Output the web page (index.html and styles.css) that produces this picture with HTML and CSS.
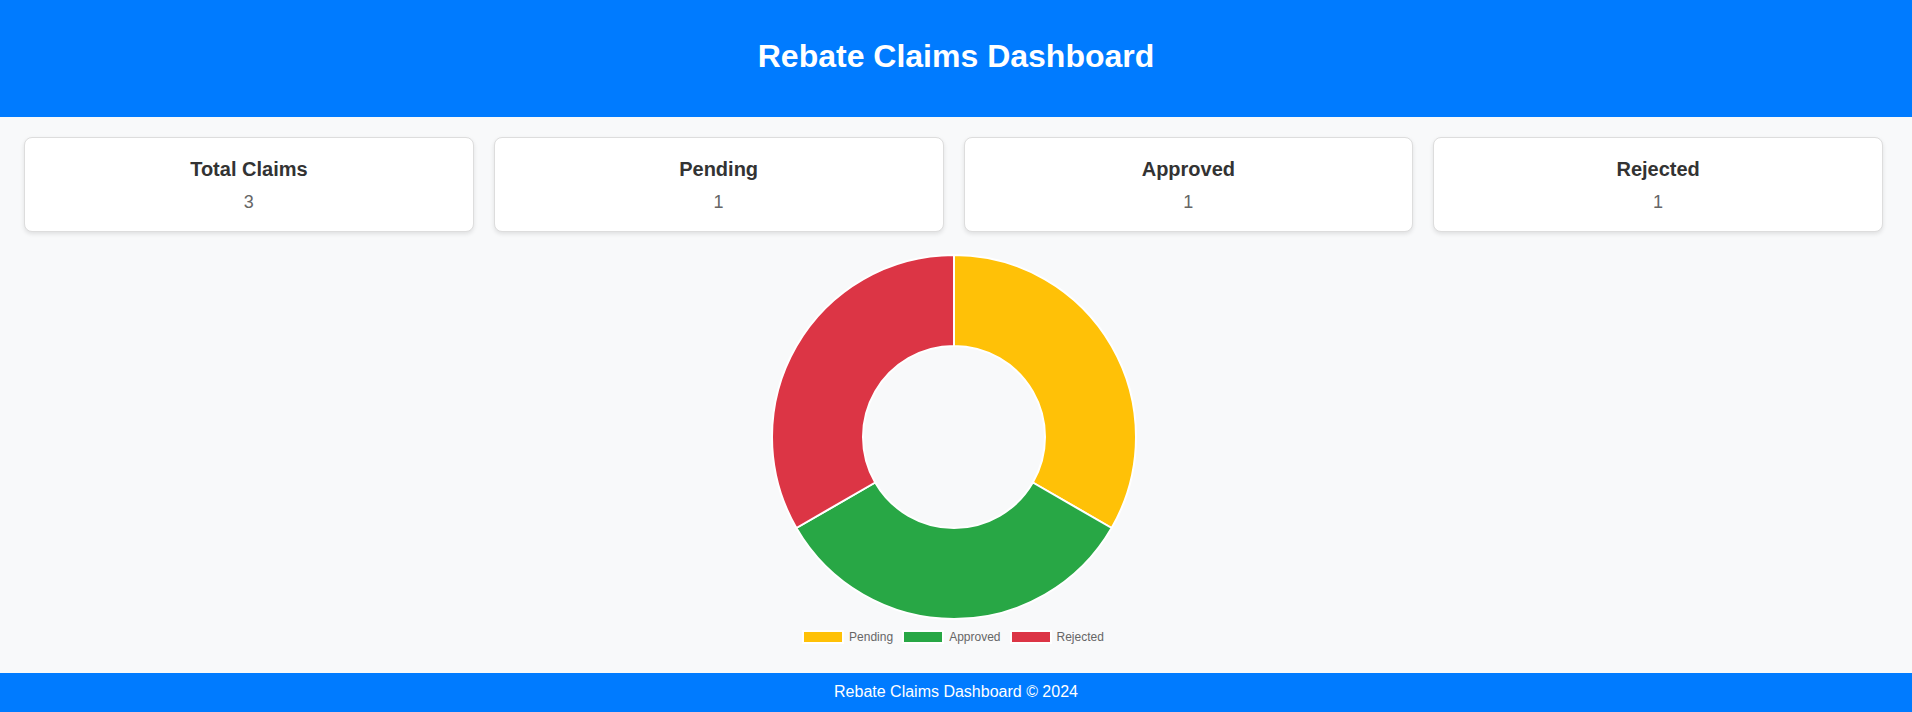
FILE: index.html
```html
<!DOCTYPE html>
<html lang="en">
<head>
<meta charset="utf-8">
<title>Rebate Claims Dashboard</title>
<link rel="stylesheet" href="styles.css">
</head>
<body>
<header class="site-header">
  <h1 class="site-title">Rebate Claims Dashboard</h1>
</header>
<main class="main">
  <section class="cards">
    <div class="card">
      <h3 class="card-title">Total Claims</h3>
      <p class="card-value">3</p>
    </div>
    <div class="card">
      <h3 class="card-title">Pending</h3>
      <p class="card-value">1</p>
    </div>
    <div class="card">
      <h3 class="card-title">Approved</h3>
      <p class="card-value">1</p>
    </div>
    <div class="card">
      <h3 class="card-title">Rejected</h3>
      <p class="card-value">1</p>
    </div>
  </section>
  <section class="chart">
    <svg class="donut" width="400" height="370" viewBox="0 0 400 370">
      <path fill="#ffc107" stroke="#ffffff" stroke-width="2" d="M200 3 A182 182 0 0 1 357.62 276 L278.81 230.5 A91 91 0 0 0 200 94 Z"/>
      <path fill="#28a745" stroke="#ffffff" stroke-width="2" d="M357.62 276 A182 182 0 0 1 42.38 276 L121.19 230.5 A91 91 0 0 0 278.81 230.5 Z"/>
      <path fill="#dc3545" stroke="#ffffff" stroke-width="2" d="M42.38 276 A182 182 0 0 1 200 3 L200 94 A91 91 0 0 0 121.19 230.5 Z"/>
    </svg>
    <div class="legend">
      <span class="legend-item"><span class="swatch swatch-pending"></span>Pending</span>
      <span class="legend-item"><span class="swatch swatch-approved"></span>Approved</span>
      <span class="legend-item"><span class="swatch swatch-rejected"></span>Rejected</span>
    </div>
  </section>
</main>
<footer class="site-footer">Rebate Claims Dashboard © 2024</footer>
</body>
</html>
```

FILE: styles.css
```css
* { box-sizing: border-box; }

body {
  margin: 0;
  background: #f8f9fa;
  font-family: "Liberation Sans", Arial, Helvetica, sans-serif;
  color: #333;
}

.site-header {
  background: #007bff;
  color: #fff;
  padding: 38px 0 42px;
  text-align: center;
}

.site-title {
  margin: 0;
  font-size: 32px;
  line-height: 37px;
  font-weight: bold;
}

.main {
  padding: 20px 29px 30px 24px;
}

.cards {
  display: flex;
  gap: 20px;
}

.card {
  flex: 1 1 0;
  background: #fff;
  border: 1px solid #ddd;
  border-radius: 8px;
  box-shadow: 0 2px 4px rgba(0, 0, 0, 0.1);
  padding: 20px 20px 18px;
  text-align: center;
}

.card-title {
  margin: 0;
  font-size: 20px;
  line-height: 23px;
  font-weight: bold;
  color: #333;
}

.card-value {
  margin: 10px 0 0;
  font-size: 18px;
  line-height: 22px;
  color: #666;
}

.chart {
  margin-top: 20px;
  display: flex;
  flex-direction: column;
  align-items: center;
}

.donut {
  display: block;
}

.legend {
  margin-top: 9px;
  height: 12px;
  display: flex;
  gap: 10px;
  font-size: 12px;
  line-height: 12px;
  color: #666;
}

.legend-item {
  display: flex;
  align-items: center;
  gap: 6px;
}

.swatch {
  display: block;
  width: 40px;
  height: 12px;
  border: 1px solid #fff;
  box-shadow: 0 0 0 1px #fff;
}

.swatch-pending { background: #ffc107; }
.swatch-approved { background: #28a745; }
.swatch-rejected { background: #dc3545; }

.site-footer {
  background: #007bff;
  color: #fff;
  text-align: center;
  font-size: 16px;
  line-height: 19px;
  padding: 9px 0 11px;
}
```
